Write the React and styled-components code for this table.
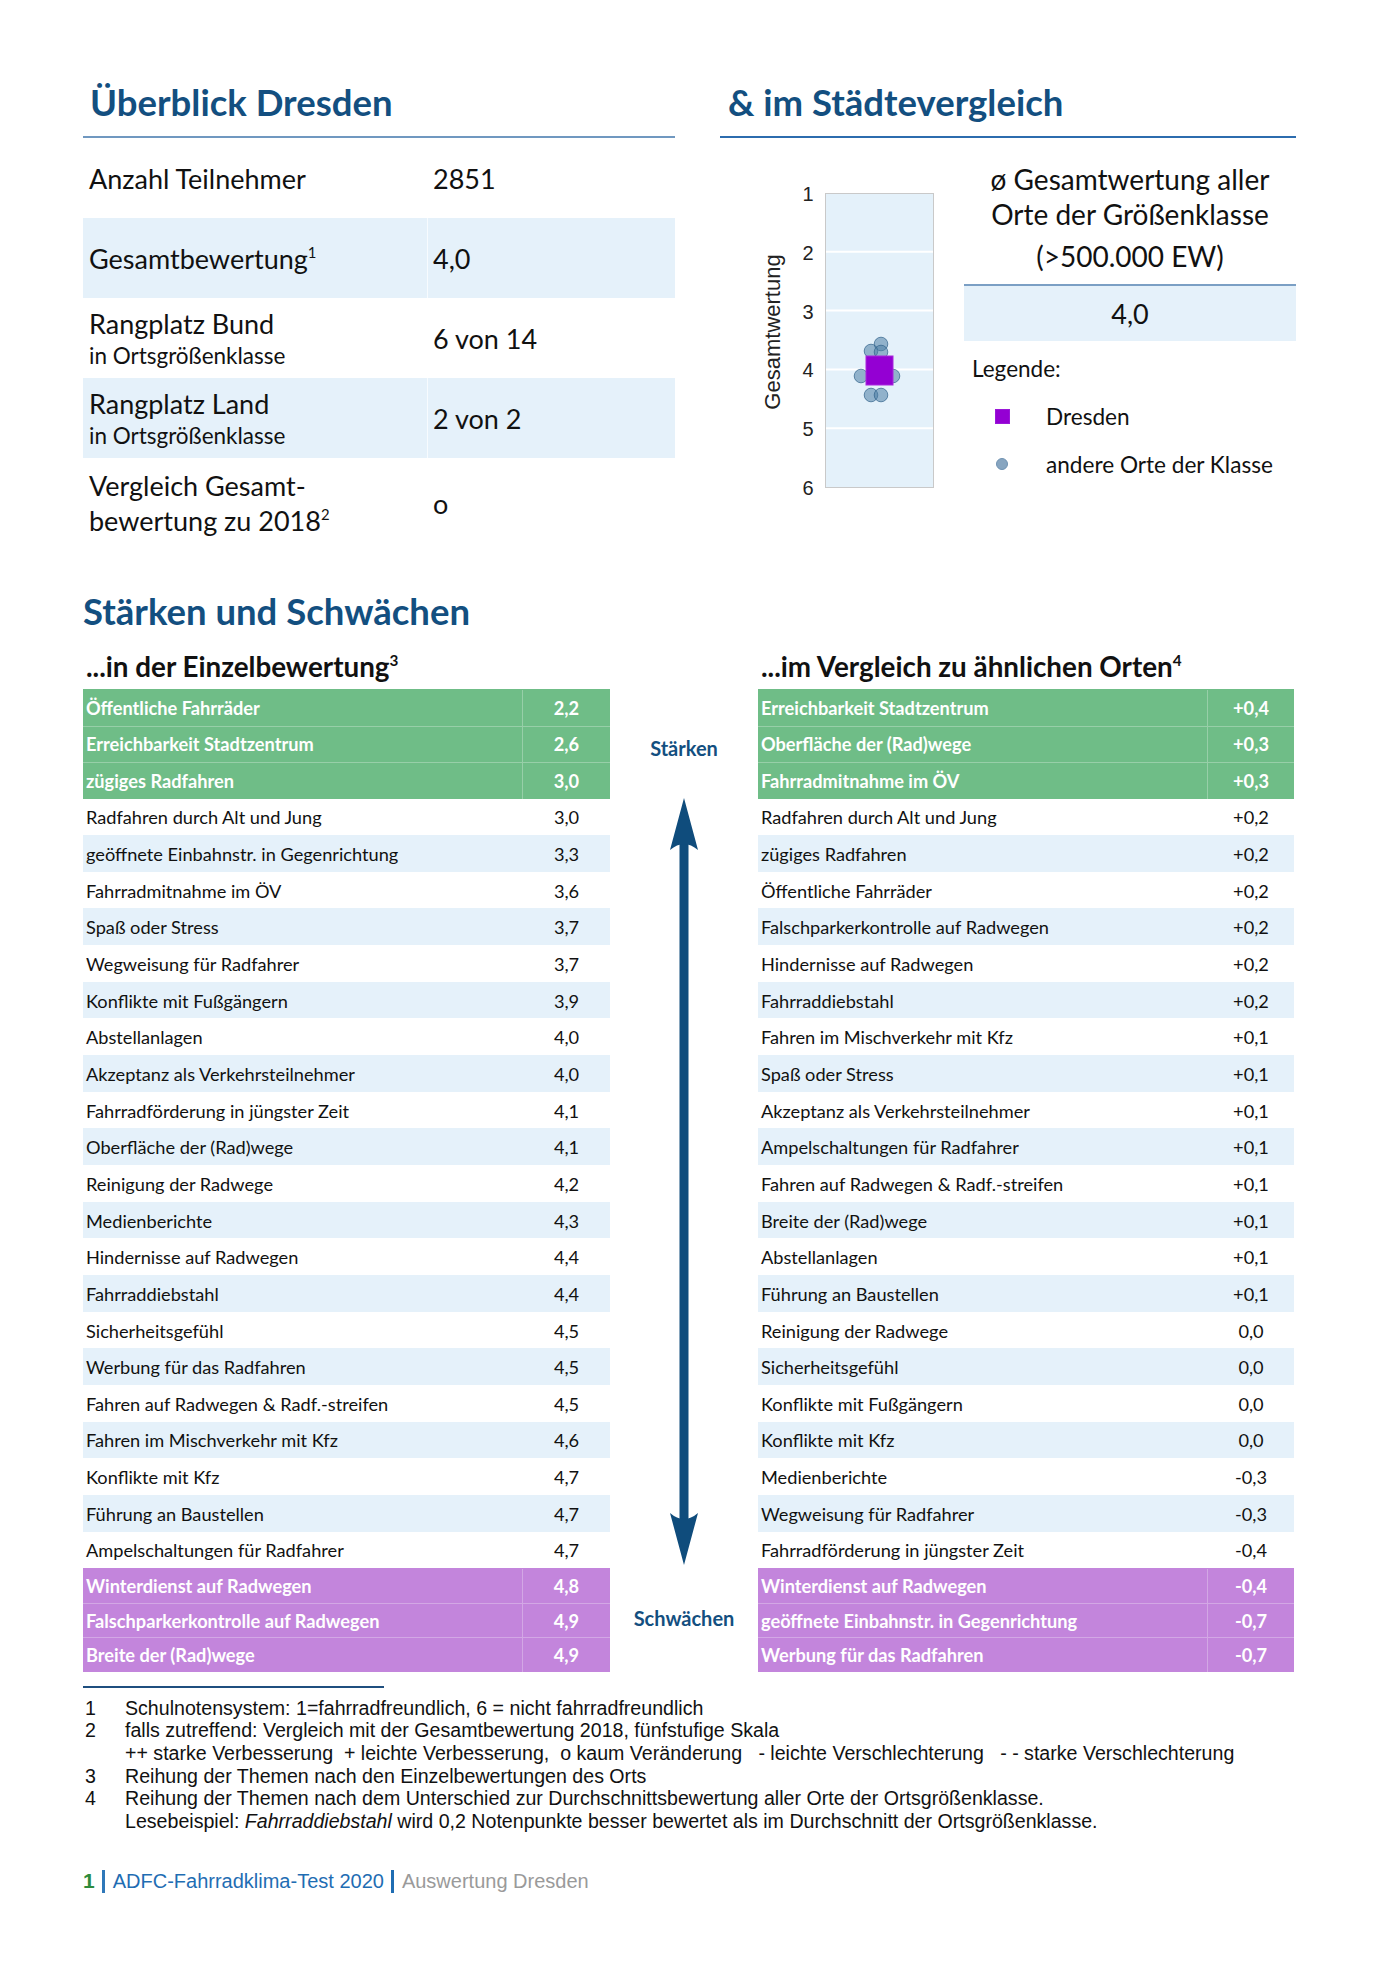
import React from "react";
import styled, { createGlobalStyle } from "styled-components";

const GlobalStyle = createGlobalStyle`
  html, body {
    margin: 0;
    padding: 0;
    background: #fff;
  }
  body {
    font-family: Lato, "Open Sans", sans-serif;
    color: #111;
  }
`;

const Page = styled.div`
  width: 1396px;
  min-height: 1969px;
  box-sizing: border-box;
  padding: 81px 100px 40px 83px;
`;

const Overview = styled.section`
  display: grid;
  grid-template-columns: 592px 576px;
  column-gap: 45px;
`;

const Column = styled.div`
  display: flex;
  flex-direction: column;
`;

const SectionTitle = styled.h1`
  margin: 0;
  padding: 0 0 13px ${(p) => p.$indent}px;
  font-size: 36.5px;
  line-height: 42px;
  font-weight: 700;
  color: #134f80;
  border-bottom: 2px solid ${(p) => p.$rule};
`;

const InfoRow = styled.div`
  display: grid;
  grid-template-columns: 344px 1fr;
  align-items: center;
  height: ${(p) => p.$h || 80}px;
  box-sizing: border-box;
  background: ${(p) => (p.$shade ? "#e5f1fa" : "transparent")};
  font-size: 27px;
  line-height: 35px;
`;

const InfoLabel = styled.div`
  padding-left: 6px;
`;

const InfoSub = styled.div`
  font-size: 22.5px;
  line-height: 30px;
`;

const InfoValue = styled.div`
  padding-left: 5px;
  align-self: stretch;
  display: flex;
  align-items: center;
  border-left: 1px solid ${(p) => (p.$shade ? "rgba(255,255,255,0.7)" : "transparent")};
`;

const Sup = styled.sup`
  font-size: 0.55em;
  line-height: 0;
  vertical-align: 0.75em;
`;

const Compare = styled.div`
  display: grid;
  grid-template-columns: 244px 1fr;
`;

const ChartBox = styled.div`
  padding: 41px 0 0 40px;
`;

const Summary = styled.div`
  padding-top: 24px;
  display: flex;
  flex-direction: column;
`;

const SummaryText = styled.div`
  text-align: center;
  font-size: 28px;
  line-height: 35px;
  margin-top: ${(p) => p.$mt || 0}px;
`;

const SummaryValue = styled.div`
  margin-top: 10px;
  height: 55px;
  border-top: 2px solid #7b9fc4;
  background: #e5f1fa;
  display: flex;
  align-items: center;
  justify-content: center;
  font-size: 27px;
`;

const LegendTitle = styled.div`
  margin-top: 13px;
  padding-left: 8px;
  font-size: 22.5px;
  line-height: 30px;
`;

const LegendList = styled.div`
  margin-top: 8px;
  display: flex;
  flex-direction: column;
`;

const LegendItem = styled.div`
  height: 48px;
  display: flex;
  align-items: center;
  padding-left: 30px;
  gap: 36px;
  font-size: 22.6px;
`;

const LegendMark = styled.span`
  width: ${(p) => (p.$round ? 12 : 15)}px;
  height: ${(p) => (p.$round ? 12 : 15)}px;
  margin: 0 ${(p) => (p.$round ? 2 : 0.5)}px;
  border-radius: ${(p) => (p.$round ? "50%" : "0")};
  background: ${(p) => (p.$round ? "#87a5c0" : "#9400d3")};
  border: 1px solid ${(p) => (p.$round ? "#6f92b2" : "#9a18d8")};
  box-sizing: border-box;
  flex: none;
`;

const Strengths = styled.section`
  margin-top: 42px;
`;

const BigTitle = styled.h2`
  margin: 0;
  font-size: 36.5px;
  line-height: 42px;
  font-weight: 700;
  color: #134f80;
`;

const RankGrid = styled.div`
  margin-top: 19px;
  display: grid;
  grid-template-columns: 527px 148px 536px;
  grid-template-rows: auto auto;
`;

const SubTitle = styled.h3`
  margin: 0 0 6px;
  padding-left: 3px;
  font-size: 27.8px;
  line-height: 32px;
  font-weight: 700;
  color: #111;
  grid-column: ${(p) => p.$col};
  grid-row: 1;
`;

const RankTable = styled.div`
  grid-column: ${(p) => p.$col};
  grid-row: 2;
  display: flex;
  flex-direction: column;
`;

const tones = {
  top: { bg: "#6fbd87", fg: "#fff" },
  low: { bg: "#c385dc", fg: "#fff" },
  odd: { bg: "#fff", fg: "#111" },
  even: { bg: "#e5f1fa", fg: "#111" },
};

const RankRow = styled.div`
  display: grid;
  grid-template-columns: 1fr ${(p) => p.$vw}px;
  height: ${(p) => p.$h}px;
  box-sizing: border-box;
  background: ${(p) => tones[p.$tone].bg};
  color: ${(p) => tones[p.$tone].fg};
  font-size: 18.2px;
  font-weight: ${(p) => (p.$tone === "top" || p.$tone === "low" ? 700 : 400)};
  border-top: 1px solid
    ${(p) =>
      (p.$tone === "top" || p.$tone === "low") && !p.$first
        ? "rgba(255,255,255,0.28)"
        : "transparent"};
`;

const RankLabel = styled.div`
  display: flex;
  align-items: center;
  padding-left: 3px;
  white-space: nowrap;
`;

const RankValue = styled.div`
  display: flex;
  align-items: center;
  justify-content: center;
  border-left: 1px solid
    ${(p) => (p.$colored ? "rgba(255,255,255,0.28)" : "transparent")};
`;

const Middle = styled.div`
  grid-column: 2;
  grid-row: 2;
  display: flex;
  flex-direction: column;
  align-items: center;
  padding-top: 47px;
`;

const ArrowLabel = styled.div`
  font-size: 20px;
  line-height: 24px;
  font-weight: 700;
  color: #134f80;
  margin-top: ${(p) => p.$mt || 0}px;
`;

const ArrowSvg = styled.svg`
  display: block;
  margin-top: 38px;
`;

const Notes = styled.section`
  margin-top: 14px;
  font-family: "Liberation Sans", Arial, sans-serif;
  font-size: 19.6px;
  line-height: 22.6px;
  color: #111;
`;

const NoteRule = styled.div`
  width: 301px;
  height: 2px;
  background: #1f4f7f;
  margin-bottom: 9px;
`;

const Note = styled.div`
  display: grid;
  grid-template-columns: 40px 1fr;
  padding-left: 2px;
`;

const NoteText = styled.div`
  white-space: pre;
`;

const Footer = styled.footer`
  margin-top: 37px;
  display: flex;
  align-items: center;
  font-family: "Liberation Sans", Arial, sans-serif;
  font-size: 20px;
  line-height: 24px;
`;

const PageNo = styled.span`
  color: #2e8b3c;
  font-weight: 700;
  font-size: 21px;
`;

const Bar = styled.span`
  display: inline-block;
  width: 3px;
  height: 23px;
  margin: 0 8px 0 7px;
  background: ${(p) => p.$color};
`;

const FooterText = styled.span`
  color: ${(p) => p.$color};
`;

const singleTop = [
  ["Öffentliche Fahrräder", "2,2"],
  ["Erreichbarkeit Stadtzentrum", "2,6"],
  ["zügiges Radfahren", "3,0"],
];

const singleMid = [
  ["Radfahren durch Alt und Jung", "3,0"],
  ["geöffnete Einbahnstr. in Gegenrichtung", "3,3"],
  ["Fahrradmitnahme im ÖV", "3,6"],
  ["Spaß oder Stress", "3,7"],
  ["Wegweisung für Radfahrer", "3,7"],
  ["Konflikte mit Fußgängern", "3,9"],
  ["Abstellanlagen", "4,0"],
  ["Akzeptanz als Verkehrsteilnehmer", "4,0"],
  ["Fahrradförderung in jüngster Zeit", "4,1"],
  ["Oberfläche der (Rad)wege", "4,1"],
  ["Reinigung der Radwege", "4,2"],
  ["Medienberichte", "4,3"],
  ["Hindernisse auf Radwegen", "4,4"],
  ["Fahrraddiebstahl", "4,4"],
  ["Sicherheitsgefühl", "4,5"],
  ["Werbung für das Radfahren", "4,5"],
  ["Fahren auf Radwegen & Radf.-streifen", "4,5"],
  ["Fahren im Mischverkehr mit Kfz", "4,6"],
  ["Konflikte mit Kfz", "4,7"],
  ["Führung an Baustellen", "4,7"],
  ["Ampelschaltungen für Radfahrer", "4,7"],
];

const singleLow = [
  ["Winterdienst auf Radwegen", "4,8"],
  ["Falschparkerkontrolle auf Radwegen", "4,9"],
  ["Breite der (Rad)wege", "4,9"],
];

const compTop = [
  ["Erreichbarkeit Stadtzentrum", "+0,4"],
  ["Oberfläche der (Rad)wege", "+0,3"],
  ["Fahrradmitnahme im ÖV", "+0,3"],
];

const compMid = [
  ["Radfahren durch Alt und Jung", "+0,2"],
  ["zügiges Radfahren", "+0,2"],
  ["Öffentliche Fahrräder", "+0,2"],
  ["Falschparkerkontrolle auf Radwegen", "+0,2"],
  ["Hindernisse auf Radwegen", "+0,2"],
  ["Fahrraddiebstahl", "+0,2"],
  ["Fahren im Mischverkehr mit Kfz", "+0,1"],
  ["Spaß oder Stress", "+0,1"],
  ["Akzeptanz als Verkehrsteilnehmer", "+0,1"],
  ["Ampelschaltungen für Radfahrer", "+0,1"],
  ["Fahren auf Radwegen & Radf.-streifen", "+0,1"],
  ["Breite der (Rad)wege", "+0,1"],
  ["Abstellanlagen", "+0,1"],
  ["Führung an Baustellen", "+0,1"],
  ["Reinigung der Radwege", "0,0"],
  ["Sicherheitsgefühl", "0,0"],
  ["Konflikte mit Fußgängern", "0,0"],
  ["Konflikte mit Kfz", "0,0"],
  ["Medienberichte", "-0,3"],
  ["Wegweisung für Radfahrer", "-0,3"],
  ["Fahrradförderung in jüngster Zeit", "-0,4"],
];

const compLow = [
  ["Winterdienst auf Radwegen", "-0,4"],
  ["geöffnete Einbahnstr. in Gegenrichtung", "-0,7"],
  ["Werbung für das Radfahren", "-0,7"],
];

// other cities of the size class, drawn around Dresden's square
const others = [
  [121, 165],
  [111, 172],
  [121, 173],
  [101, 197],
  [133, 197],
  [111, 216],
  [121, 216],
];

const STEP = 58.8;

function ScoreChart() {
  return (
    <svg width="180" height="320" viewBox="0 0 180 320">
      <rect x="65.5" y="14.5" width="108" height="294" fill="#e4f1fa" stroke="#c9c9c9" />
      {[1, 2, 3, 4].map((i) => (
        <line
          key={i}
          x1="66"
          x2="173"
          y1={14 + i * STEP}
          y2={14 + i * STEP}
          stroke="#fff"
          strokeWidth="2"
        />
      ))}
      {[1, 2, 3, 4, 5, 6].map((t, i) => (
        <text
          key={t}
          x="48"
          y={15 + i * STEP}
          textAnchor="middle"
          dominantBaseline="central"
          fontFamily="'Liberation Sans', Arial, sans-serif"
          fontSize="20"
          fill="#222"
        >
          {t}
        </text>
      ))}
      <text
        transform="translate(12 153) rotate(-90)"
        textAnchor="middle"
        dominantBaseline="central"
        fontFamily="'Liberation Sans', Arial, sans-serif"
        fontSize="22"
        fill="#222"
      >
        Gesamtwertung
      </text>
      {others.map(([cx, cy], i) => (
        <circle
          key={i}
          cx={cx}
          cy={cy}
          r="6.8"
          fill="#4d7da4"
          fillOpacity="0.55"
          stroke="#2f6189"
          strokeOpacity="0.7"
        />
      ))}
      <rect x="106" y="177" width="27" height="29" fill="#9400d3" stroke="#a926dc" />
    </svg>
  );
}

function Arrow() {
  return (
    <ArrowSvg width="32" height="767" viewBox="0 0 32 767">
      <rect x="11.5" y="40" width="9" height="687" fill="#0f4c7c" />
      <path d="M16 0 L30 52 Q16 40 2 52 Z" fill="#0f4c7c" />
      <path d="M16 767 L30 715 Q16 727 2 715 Z" fill="#0f4c7c" />
    </ArrowSvg>
  );
}

function Ranking({ col, top, mid, low, vw }) {
  return (
    <RankTable $col={col}>
      {top.map(([label, value], i) => (
        <RankRow key={label} $tone="top" $h={36.5} $vw={vw} $first={i === 0}>
          <RankLabel>{label}</RankLabel>
          <RankValue $colored>{value}</RankValue>
        </RankRow>
      ))}
      {mid.map(([label, value], i) => (
        <RankRow key={label} $tone={i % 2 ? "even" : "odd"} $h={36.67} $vw={vw}>
          <RankLabel>{label}</RankLabel>
          <RankValue>{value}</RankValue>
        </RankRow>
      ))}
      {low.map(([label, value], i) => (
        <RankRow key={label} $tone="low" $h={34.5} $vw={vw} $first={i === 0}>
          <RankLabel>{label}</RankLabel>
          <RankValue $colored>{value}</RankValue>
        </RankRow>
      ))}
    </RankTable>
  );
}

export default function App() {
  return (
    <>
      <GlobalStyle />
      <Page>
        <Overview>
          <Column>
            <SectionTitle $indent={7} $rule="#7098c0">
              Überblick Dresden
            </SectionTitle>
            <InfoRow>
              <InfoLabel>Anzahl Teilnehmer</InfoLabel>
              <InfoValue>2851</InfoValue>
            </InfoRow>
            <InfoRow $shade>
              <InfoLabel>
                Gesamtbewertung<Sup>1</Sup>
              </InfoLabel>
              <InfoValue $shade>4,0</InfoValue>
            </InfoRow>
            <InfoRow>
              <InfoLabel>
                Rangplatz Bund
                <InfoSub>in Ortsgrößenklasse</InfoSub>
              </InfoLabel>
              <InfoValue>6 von 14</InfoValue>
            </InfoRow>
            <InfoRow $shade>
              <InfoLabel>
                Rangplatz Land
                <InfoSub>in Ortsgrößenklasse</InfoSub>
              </InfoLabel>
              <InfoValue $shade>2 von 2</InfoValue>
            </InfoRow>
            <InfoRow $h={90}>
              <InfoLabel>
                Vergleich Gesamt-
                <br />
                bewertung zu 2018<Sup>2</Sup>
              </InfoLabel>
              <InfoValue>o</InfoValue>
            </InfoRow>
          </Column>

          <Column>
            <SectionTitle $indent={8} $rule="#2c6cae">
              &amp; im Städtevergleich
            </SectionTitle>
            <Compare>
              <ChartBox>
                <ScoreChart />
              </ChartBox>
              <Summary>
                <SummaryText>
                  ø Gesamtwertung aller
                  <br />
                  Orte der Größenklasse
                </SummaryText>
                <SummaryText $mt={7}>(&gt;500.000 EW)</SummaryText>
                <SummaryValue>4,0</SummaryValue>
                <LegendTitle>Legende:</LegendTitle>
                <LegendList>
                  <LegendItem>
                    <LegendMark />
                    Dresden
                  </LegendItem>
                  <LegendItem>
                    <LegendMark $round />
                    andere Orte der Klasse
                  </LegendItem>
                </LegendList>
              </Summary>
            </Compare>
          </Column>
        </Overview>

        <Strengths>
          <BigTitle>Stärken und Schwächen</BigTitle>
          <RankGrid>
            <SubTitle $col={1}>
              ...in der Einzelbewertung<Sup>3</Sup>
            </SubTitle>
            <SubTitle $col={3}>
              ...im Vergleich zu ähnlichen Orten<Sup>4</Sup>
            </SubTitle>
            <Ranking col={1} top={singleTop} mid={singleMid} low={singleLow} vw={88} />
            <Middle>
              <ArrowLabel>Stärken</ArrowLabel>
              <Arrow />
              <ArrowLabel $mt={41}>Schwächen</ArrowLabel>
            </Middle>
            <Ranking col={3} top={compTop} mid={compMid} low={compLow} vw={87} />
          </RankGrid>
        </Strengths>

        <Notes>
          <NoteRule />
          <Note>
            <span>1</span>
            <NoteText>Schulnotensystem: 1=fahrradfreundlich, 6 = nicht fahrradfreundlich</NoteText>
          </Note>
          <Note>
            <span>2</span>
            <NoteText>
              {"falls zutreffend: Vergleich mit der Gesamtbewertung 2018, fünfstufige Skala\n++ starke Verbesserung  + leichte Verbesserung,  o kaum Veränderung   - leichte Verschlechterung   - - starke Verschlechterung"}
            </NoteText>
          </Note>
          <Note>
            <span>3</span>
            <NoteText>Reihung der Themen nach den Einzelbewertungen des Orts</NoteText>
          </Note>
          <Note>
            <span>4</span>
            <NoteText>
              {"Reihung der Themen nach dem Unterschied zur Durchschnittsbewertung aller Orte der Ortsgrößenklasse.\nLesebeispiel: "}
              <i>Fahrraddiebstahl</i>
              {" wird 0,2 Notenpunkte besser bewertet als im Durchschnitt der Ortsgrößenklasse."}
            </NoteText>
          </Note>
        </Notes>

        <Footer>
          <PageNo>1</PageNo>
          <Bar $color="#2f78b9" />
          <FooterText $color="#1f6db3">ADFC-Fahrradklima-Test 2020</FooterText>
          <Bar $color="#1f6db3" />
          <FooterText $color="#9a9a9a">Auswertung Dresden</FooterText>
        </Footer>
      </Page>
    </>
  );
}
